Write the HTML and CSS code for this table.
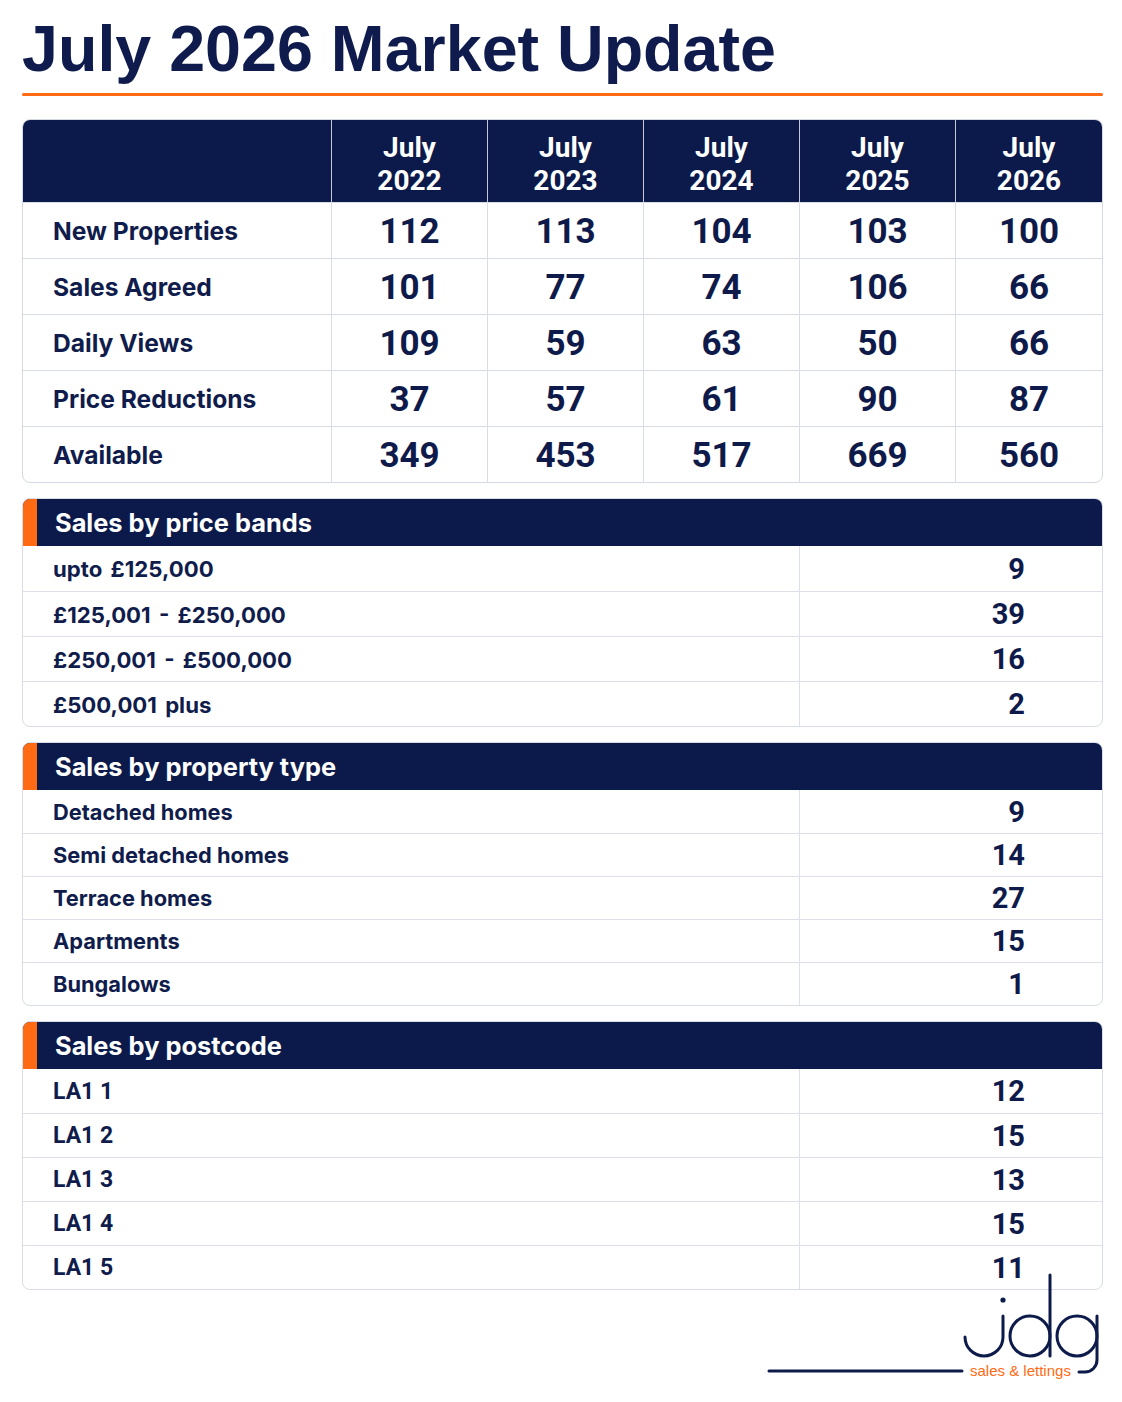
FILE: index.html
```html
<!DOCTYPE html>
<html lang="en">
<head>
<meta charset="utf-8">
<title>July 2026 Market Update</title>
<link rel="stylesheet" href="styles.css">
</head>
<body>
<div class="page">
  <h1 class="title">July 2026 Market Update</h1>
  <div class="rule"></div>

  <div class="stats">
    <div class="srow head">
      <div class="hcell first"></div>
      <div class="hcell">July<br>2022</div>
      <div class="hcell">July<br>2023</div>
      <div class="hcell">July<br>2024</div>
      <div class="hcell">July<br>2025</div>
      <div class="hcell">July<br>2026</div>
    </div>
    <div class="srow">
      <div class="lcell">New Properties</div>
      <div class="ncell">112</div><div class="ncell">113</div><div class="ncell">104</div><div class="ncell">103</div><div class="ncell">100</div>
    </div>
    <div class="srow">
      <div class="lcell">Sales Agreed</div>
      <div class="ncell">101</div><div class="ncell">77</div><div class="ncell">74</div><div class="ncell">106</div><div class="ncell">66</div>
    </div>
    <div class="srow">
      <div class="lcell">Daily Views</div>
      <div class="ncell">109</div><div class="ncell">59</div><div class="ncell">63</div><div class="ncell">50</div><div class="ncell">66</div>
    </div>
    <div class="srow">
      <div class="lcell">Price Reductions</div>
      <div class="ncell">37</div><div class="ncell">57</div><div class="ncell">61</div><div class="ncell">90</div><div class="ncell">87</div>
    </div>
    <div class="srow">
      <div class="lcell">Available</div>
      <div class="ncell">349</div><div class="ncell">453</div><div class="ncell">517</div><div class="ncell">669</div><div class="ncell">560</div>
    </div>
  </div>

  <div class="section bands">
    <div class="sec-head"><span class="sec-title">Sales by price bands</span></div>
    <div class="row"><div class="rlabel band">upto £125,000</div><div class="rval">9</div></div>
    <div class="row"><div class="rlabel band">£125,001 - £250,000</div><div class="rval">39</div></div>
    <div class="row"><div class="rlabel band">£250,001 - £500,000</div><div class="rval">16</div></div>
    <div class="row"><div class="rlabel band">£500,001 plus</div><div class="rval">2</div></div>
  </div>

  <div class="section types">
    <div class="sec-head"><span class="sec-title">Sales by property type</span></div>
    <div class="row"><div class="rlabel">Detached homes</div><div class="rval">9</div></div>
    <div class="row"><div class="rlabel">Semi detached homes</div><div class="rval">14</div></div>
    <div class="row"><div class="rlabel">Terrace homes</div><div class="rval">27</div></div>
    <div class="row"><div class="rlabel">Apartments</div><div class="rval">15</div></div>
    <div class="row"><div class="rlabel">Bungalows</div><div class="rval">1</div></div>
  </div>

  <div class="section codes">
    <div class="sec-head"><span class="sec-title">Sales by postcode</span></div>
    <div class="row"><div class="rlabel code">LA1 1</div><div class="rval">12</div></div>
    <div class="row"><div class="rlabel code">LA1 2</div><div class="rval">15</div></div>
    <div class="row"><div class="rlabel code">LA1 3</div><div class="rval">13</div></div>
    <div class="row"><div class="rlabel code">LA1 4</div><div class="rval">15</div></div>
    <div class="row"><div class="rlabel code">LA1 5</div><div class="rval">11</div></div>
  </div>

  <div class="footer">
    <svg class="logo" width="338" height="112" viewBox="0 0 338 112" role="img" aria-label="jdg sales &amp; lettings">
      <g fill="none" stroke="#0d1b4b" stroke-width="3" stroke-linecap="round">
        <line x1="4" y1="102" x2="197" y2="102"/>
        <path d="M238 47 V68 A19 19 0 0 1 200 68"/>
        <circle cx="265" cy="67" r="20"/>
        <line x1="285" y1="6" x2="285" y2="87"/>
        <circle cx="312" cy="67" r="20"/>
        <path d="M332 47 V91 A12 12 0 0 1 320 103 H314"/>
      </g>
      <circle cx="238" cy="31" r="2.6" fill="#0d1b4b"/>
      <text class="tagline" x="205" y="107">sales &amp; lettings</text>
    </svg>
  </div>
</div>
</body>
</html>
```

FILE: styles.css
```css
* { box-sizing: border-box; }

body {
  margin: 0;
  background: #ffffff;
  color: #101c4b;
  font-family: Inter, Roboto, "Liberation Sans", sans-serif;
}

.page {
  padding: 13px 19px 24px 22px;
}

.title {
  margin: 0;
  font-family: "Liberation Sans", Arial, sans-serif;
  font-weight: 700;
  font-size: 64.6px;
  line-height: 72px;
  color: #0e1b4c;
}

.rule {
  height: 3px;
  margin-top: 8px;
  background: #ff6a13;
  border-radius: 2px;
}

/* main comparison table */
.stats {
  margin-top: 23px;
  border: 1px solid #d5d9e3;
  border-radius: 8px;
  overflow: hidden;
  background: #ffffff;
}

.srow {
  display: grid;
  grid-template-columns: 308px 156px 156px 156px 156px 1fr;
  height: 56px;
  border-top: 1px solid #d9dde6;
}

.srow.head {
  height: 82px;
  border-top: 0;
  background: #0b1a4a;
}

.hcell {
  display: flex;
  align-items: center;
  justify-content: center;
  padding-top: 6px;
  text-align: center;
  color: #ffffff;
  font-family: Roboto, "Liberation Sans", sans-serif;
  font-weight: 700;
  font-size: 28px;
  line-height: 33px;
  border-left: 1px solid #c4c9d6;
}

.hcell.first { border-left: 0; }

.lcell {
  display: flex;
  align-items: center;
  padding-left: 30px;
  font-weight: 700;
  font-size: 24.6px;
  color: #101c4b;
}

.ncell {
  display: flex;
  align-items: center;
  justify-content: center;
  padding-top: 2px;
  border-left: 1px solid #d9dde6;
  font-family: Roboto, "Liberation Sans", sans-serif;
  font-weight: 700;
  font-size: 35px;
  color: #0e1a4a;
}

/* sections */
.section {
  margin-top: 15px;
  border: 1px solid #d9dde6;
  border-radius: 8px;
  overflow: hidden;
  background: #ffffff;
}

.sec-head {
  height: 48px;
  margin: -1px -1px 0 -1px;
  display: flex;
  align-items: center;
  background: #0b1a4a;
  border-left: 15px solid #ff6a13;
  padding-left: 18px;
}

.sec-title {
  color: #ffffff;
  font-weight: 700;
  font-size: 25.4px;
}

.row {
  display: grid;
  grid-template-columns: 776px 1fr;
  border-top: 1px solid #dde0e8;
}

.sec-head + .row { border-top: 0; }

.bands .row { height: 45px; }
.types .row { height: 43px; }
.codes .row { height: 44px; }

.rlabel {
  display: flex;
  align-items: center;
  padding-left: 30px;
  font-weight: 700;
  font-size: 21.8px;
  color: #101c4b;
}

.rlabel.band {
  font-size: 22.2px;
  word-spacing: 3px;
}

.rlabel.code {
  font-family: Roboto, "Liberation Sans", sans-serif;
  font-size: 23px;
}

.rval {
  display: flex;
  align-items: center;
  justify-content: flex-end;
  padding-right: 77px;
  border-left: 1px solid #dde0e8;
  font-family: Roboto, "Liberation Sans", sans-serif;
  font-weight: 700;
  font-size: 29px;
  color: #0e1a4a;
}

/* footer logo */
.footer {
  display: flex;
  justify-content: flex-end;
}

.logo {
  display: block;
  margin-top: -21px;
  position: relative;
  z-index: 1;
}

.tagline {
  font-family: "Liberation Sans", Arial, sans-serif;
  font-size: 15px;
  fill: #ff6a13;
}
```
